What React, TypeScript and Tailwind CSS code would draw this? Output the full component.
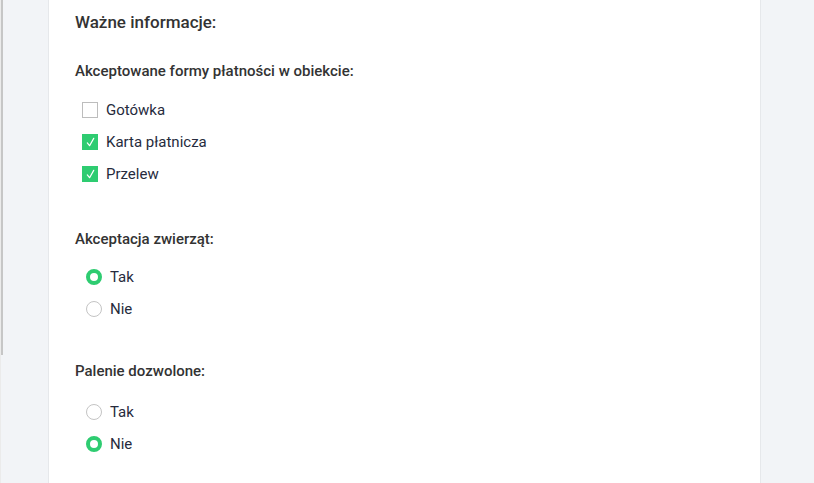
import { useState } from "react"

function Checkbox({ label, checked, onToggle }: { label: string; checked: boolean; onToggle: () => void }) {
  return (
    <label className="flex h-8 items-center gap-2 pl-[7px] cursor-pointer" onClick={onToggle}>
      {checked ? (
        <span className="flex h-4 w-4 items-center justify-center bg-[#2ecc71]">
          <svg width="11" height="11" viewBox="0 0 12 12" fill="none">
            <path d="M2.5 6.5 L5 9.5 L9.5 1.5" stroke="white" strokeWidth="1.3" strokeLinecap="round" strokeLinejoin="round" />
          </svg>
        </span>
      ) : (
        <span className="h-4 w-4 border border-[#bdbdbd] bg-white" />
      )}
      <span className="text-[15px] text-[#262b3d]">{label}</span>
    </label>
  )
}

function Radio({ label, checked, onSelect }: { label: string; checked: boolean; onSelect: () => void }) {
  return (
    <label className="flex h-8 items-center gap-2 pl-[11px] cursor-pointer" onClick={onSelect}>
      {checked ? (
        <span className="h-4 w-4 rounded-full border-[4px] border-[#2ecc71] bg-white" />
      ) : (
        <span className="h-4 w-4 rounded-full border border-[#c4c4c4] bg-white" />
      )}
      <span className="text-[15px] text-[#262b3d]">{label}</span>
    </label>
  )
}

export default function App() {
  const [payments, setPayments] = useState({ cash: false, card: true, transfer: true })
  const [pets, setPets] = useState("tak")
  const [smoking, setSmoking] = useState("nie")

  return (
    <div className="flex h-[483px] w-full overflow-hidden bg-[#f2f4f7] font-['Roboto',sans-serif]">
      <div className="flex w-[48px] shrink-0">
        <div className="w-px bg-[#ebebeb]" />
        <div className="h-[355px] w-[2px] bg-[#c6c6c6]" />
      </div>
      <div className="w-[713px] shrink-0 border-x border-[#e6e8eb] bg-white pl-[26px] pt-[10px]">
        <h2 className="h-6 text-[17px] font-medium leading-6 text-[#333]">Ważne informacje:</h2>

        <h3 className="mt-[27px] h-5 text-[15px] font-medium leading-5 text-[#333]">
          Akceptowane formy płatności w obiekcie:
        </h3>
        <div className="mt-[13px]">
          <Checkbox label="Gotówka" checked={payments.cash} onToggle={() => setPayments({ ...payments, cash: !payments.cash })} />
          <Checkbox label="Karta płatnicza" checked={payments.card} onToggle={() => setPayments({ ...payments, card: !payments.card })} />
          <Checkbox label="Przelew" checked={payments.transfer} onToggle={() => setPayments({ ...payments, transfer: !payments.transfer })} />
        </div>

        <h3 className="mt-[39px] h-5 text-[15px] font-medium leading-5 text-[#333]">Akceptacja zwierząt:</h3>
        <div className="mt-[12px]">
          <Radio label="Tak" checked={pets === "tak"} onSelect={() => setPets("tak")} />
          <Radio label="Nie" checked={pets === "nie"} onSelect={() => setPets("nie")} />
        </div>

        <h3 className="mt-[36px] h-5 text-[15px] font-medium leading-5 text-[#333]">Palenie dozwolone:</h3>
        <div className="mt-[15px]">
          <Radio label="Tak" checked={smoking === "tak"} onSelect={() => setSmoking("tak")} />
          <Radio label="Nie" checked={smoking === "nie"} onSelect={() => setSmoking("nie")} />
        </div>
      </div>
      <div className="flex-1" />
    </div>
  )
}
